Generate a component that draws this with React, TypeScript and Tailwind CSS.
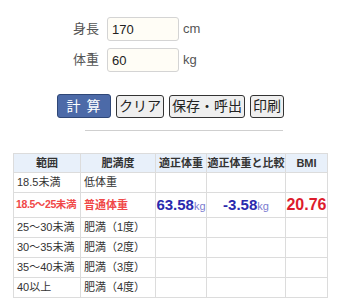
import React from 'react';

const jp = "font-['Liberation_Sans','Noto_Sans_CJK_JP',sans-serif]";

const rows = [
  { range: '18.5未満', level: '低体重' },
  { range: '18.5〜25未満', level: '普通体重', hit: true },
  { range: '25〜30未満', level: '肥満（1度）' },
  { range: '30〜35未満', level: '肥満（2度）' },
  { range: '35〜40未満', level: '肥満（3度）' },
  { range: '40以上', level: '肥満（4度）' },
];

const Field = ({ label, value, unit }: { label: string; value: string; unit: string }) => (
  <div className="flex items-center h-[24px]">
    <span className="w-[49px] text-right text-[13px] text-[#555] mr-[8px]">{label}</span>
    <input
      defaultValue={value}
      className="w-[72px] h-[24px] px-[4px] text-[13px] text-[#222] bg-[#fffdf6] border border-[#d4d4d4] rounded-[3px] outline-none"
    />
    <span className="ml-[4px] text-[13px] text-[#555]">{unit}</span>
  </div>
);

const App = () => {
  return (
    <div className={`${jp} w-[341px] h-[300px] bg-white relative`}>
      <div className="pt-[17px] pl-[50px] flex flex-col gap-[7px]">
        <Field label="身長" value="170" unit="cm" />
        <Field label="体重" value="60" unit="kg" />
      </div>

      <div className="flex items-center gap-[5px] pl-[57px] mt-[22px]">
        <button className="w-[54px] h-[24px] rounded-[3px] bg-[#4c6aa8] border border-[#2f4777] text-white text-[14px] tracking-[6px] pl-[5px]">
          計算
        </button>
        <button className="h-[23px] px-[2px] rounded-[3px] bg-[#efefef] border border-[#333] text-[14px] text-[#222]">
          クリア
        </button>
        <button className="h-[23px] px-[2px] rounded-[3px] bg-[#efefef] border border-[#333] text-[14px] text-[#222]">
          保存・呼出
        </button>
        <button className="h-[23px] px-[2px] rounded-[3px] bg-[#efefef] border border-[#333] text-[14px] text-[#222]">
          印刷
        </button>
      </div>

      <div className="ml-[85px] w-[198px] h-px bg-[#cfcfcf] mt-[12px]" />

      <table className="ml-[13px] mt-[22px] border-collapse text-[11px] text-[#333] table-fixed w-[314px]">
        <colgroup>
          <col className="w-[67px]" />
          <col className="w-[75px]" />
          <col className="w-[51px]" />
          <col className="w-[79px]" />
          <col className="w-[42px]" />
        </colgroup>
        <thead>
          <tr className="bg-[#e8f0fa] h-[19px]">
            <th className="border border-[#dcdcdc] text-[11px] font-bold text-center">範囲</th>
            <th className="border border-[#dcdcdc] text-[11px] font-bold text-center">肥満度</th>
            <th className="border border-[#dcdcdc] text-[11px] font-bold text-center whitespace-nowrap">適正体重</th>
            <th className="border border-[#dcdcdc] text-[11px] font-bold text-center whitespace-nowrap">適正体重と比較</th>
            <th className="border border-[#dcdcdc] text-[11px] font-bold text-center">BMI</th>
          </tr>
        </thead>
        <tbody>
          {rows.map((r) =>
            r.hit ? (
              <tr key={r.range} className="h-[23px]">
                <td className="border border-[#dcdcdc] px-[2px] text-[10.5px] tracking-[-0.4px] text-[#f04848] font-bold whitespace-nowrap overflow-hidden">{r.range}</td>
                <td className="border border-[#dcdcdc] px-[3px] text-[#f04848] font-bold">{r.level}</td>
                <td className="border border-[#dcdcdc] text-center whitespace-nowrap">
                  <span className="text-[15px] font-bold text-[#2a2aae]">63.58</span>
                  <span className="text-[11px] text-[#7c7cd0]">kg</span>
                </td>
                <td className="border border-[#dcdcdc] text-center whitespace-nowrap">
                  <span className="text-[15px] font-bold text-[#2a2aae]">-3.58</span>
                  <span className="text-[11px] text-[#7c7cd0]">kg</span>
                </td>
                <td className="border border-[#dcdcdc] text-center text-[16px] font-bold text-[#dd1c2c]">20.76</td>
              </tr>
            ) : (
              <tr key={r.range} className="h-[20px]">
                <td className="border border-[#dcdcdc] px-[3px] whitespace-nowrap">{r.range}</td>
                <td className="border border-[#dcdcdc] px-[3px] whitespace-nowrap">{r.level}</td>
                <td className="border border-[#dcdcdc]" />
                <td className="border border-[#dcdcdc]" />
                <td className="border border-[#dcdcdc]" />
              </tr>
            )
          )}
        </tbody>
      </table>
    </div>
  );
};

export default App;
